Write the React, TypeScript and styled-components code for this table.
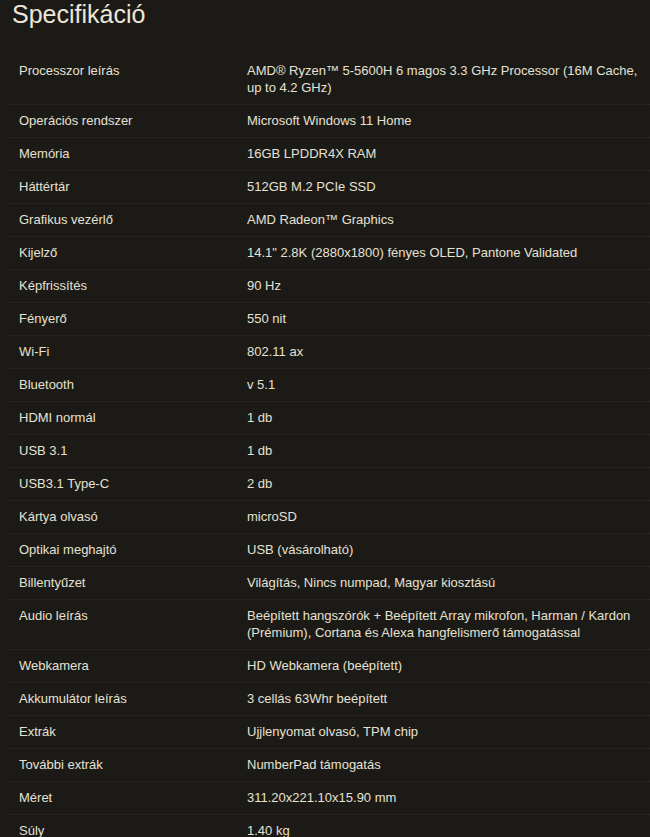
import styled, { createGlobalStyle } from "styled-components";

const GlobalStyle = createGlobalStyle`
  body {
    margin: 0;
    background: #1c1a17;
    font-family: "Liberation Sans", Arial, sans-serif;
    color: #e6e1d2;
  }
`;

const Page = styled.div`
  min-height: 837px;
  overflow: hidden;
`;

const Title = styled.h2`
  margin: 0;
  padding-left: 12px;
  font-size: 25px;
  font-weight: 400;
  line-height: 29px;
  color: #ece7d8;
`;

const SpecList = styled.div`
  margin: 25px 0 0 10px;
  width: 640px;
`;

const SpecRow = styled.div`
  display: grid;
  grid-template-columns: 228px 1fr;
  border-top: 1px dotted #2e2b27;
  &:first-child {
    border-top-color: transparent;
  }
`;

const Cell = styled.div`
  padding: 7px 9px 8px;
  font-size: 13px;
  line-height: 17px;
`;

interface Spec {
  label: string;
  value: string;
}

const specs: Spec[] = [
  {
    label: "Processzor leírás",
    value:
      "AMD® Ryzen™ 5-5600H 6 magos 3.3 GHz Processor (16M Cache, up to 4.2 GHz)",
  },
  { label: "Operációs rendszer", value: "Microsoft Windows 11 Home" },
  { label: "Memória", value: "16GB LPDDR4X RAM" },
  { label: "Háttértár", value: "512GB M.2 PCIe SSD" },
  { label: "Grafikus vezérlő", value: "AMD Radeon™ Graphics" },
  {
    label: "Kijelző",
    value: "14.1\" 2.8K (2880x1800) fényes OLED, Pantone Validated",
  },
  { label: "Képfrissítés", value: "90 Hz" },
  { label: "Fényerő", value: "550 nit" },
  { label: "Wi-Fi", value: "802.11 ax" },
  { label: "Bluetooth", value: "v 5.1" },
  { label: "HDMI normál", value: "1 db" },
  { label: "USB 3.1", value: "1 db" },
  { label: "USB3.1 Type-C", value: "2 db" },
  { label: "Kártya olvasó", value: "microSD" },
  { label: "Optikai meghajtó", value: "USB (vásárolható)" },
  { label: "Billentyűzet", value: "Világítás, Nincs numpad, Magyar kiosztású" },
  {
    label: "Audio leírás",
    value:
      "Beépített hangszórók + Beépített Array mikrofon, Harman / Kardon (Prémium), Cortana és Alexa hangfelismerő támogatással",
  },
  { label: "Webkamera", value: "HD Webkamera (beépített)" },
  { label: "Akkumulátor leírás", value: "3 cellás 63Whr beépített" },
  { label: "Extrák", value: "Ujjlenyomat olvasó, TPM chip" },
  { label: "További extrák", value: "NumberPad támogatás" },
  { label: "Méret", value: "311.20x221.10x15.90 mm" },
  { label: "Súly", value: "1.40 kg" },
];

export default function App() {
  return (
    <Page>
      <GlobalStyle />
      <Title>Specifikáció</Title>
      <SpecList>
        {specs.map((spec) => (
          <SpecRow key={spec.label}>
            <Cell>{spec.label}</Cell>
            <Cell>{spec.value}</Cell>
          </SpecRow>
        ))}
      </SpecList>
    </Page>
  );
}
